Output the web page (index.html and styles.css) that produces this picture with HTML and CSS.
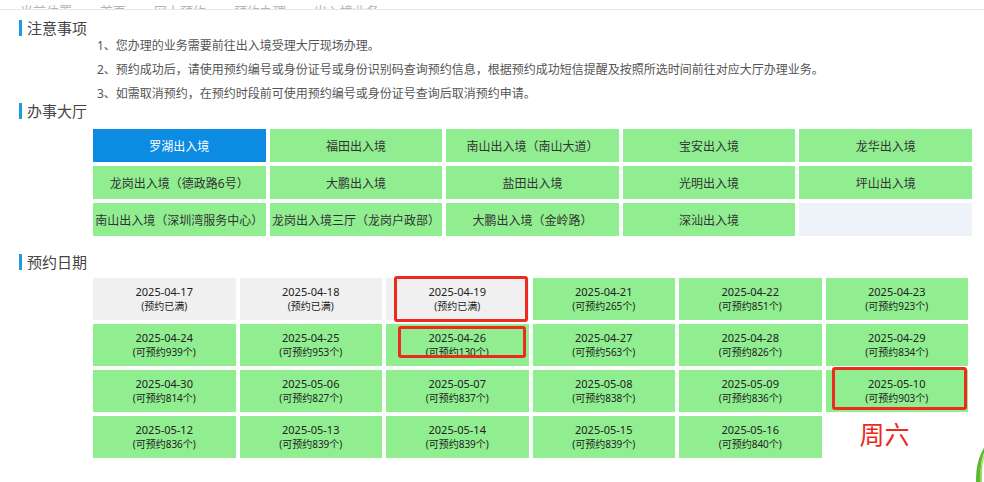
FILE: index.html
```html
<!DOCTYPE html>
<html>
<head>
    <meta charset="UTF-8">
    <title>预约办理</title>
    <link rel="stylesheet" href="styles.css">
</head>
<body>
    <div class="topnav">
        <span>当前位置</span><span>首页</span><span>网上预约</span><span>预约办理</span><span>出入境业务</span>
    </div>

    <h3 class="section-title">注意事项</h3>
    <div class="notes">
        <p>1、您办理的业务需要前往出入境受理大厅现场办理。</p>
        <p>2、预约成功后，请使用预约编号或身份证号或身份识别码查询预约信息，根据预约成功短信提醒及按照所选时间前往对应大厅办理业务。</p>
        <p>3、如需取消预约，在预约时段前可使用预约编号或身份证号查询后取消预约申请。</p>
    </div>

    <h3 class="section-title hall-title">办事大厅</h3>
    <div class="hall-grid">
        <div class="hall active">罗湖出入境</div>
        <div class="hall">福田出入境</div>
        <div class="hall">南山出入境（南山大道）</div>
        <div class="hall">宝安出入境</div>
        <div class="hall">龙华出入境</div>
        <div class="hall">龙岗出入境（德政路6号）</div>
        <div class="hall">大鹏出入境</div>
        <div class="hall">盐田出入境</div>
        <div class="hall">光明出入境</div>
        <div class="hall">坪山出入境</div>
        <div class="hall">南山出入境（深圳湾服务中心）</div>
        <div class="hall">龙岗出入境三厅（龙岗户政部）</div>
        <div class="hall">大鹏出入境（金岭路）</div>
        <div class="hall">深汕出入境</div>
        <div class="hall empty"></div>
    </div>

    <h3 class="section-title date-title">预约日期</h3>
    <div class="date-grid">
        <div class="day full"><b>2025-04-17</b><span>(预约已满)</span></div>
        <div class="day full"><b>2025-04-18</b><span>(预约已满)</span></div>
        <div class="day full"><b>2025-04-19</b><span>(预约已满)</span><i class="mark mark-a"></i></div>
        <div class="day"><b>2025-04-21</b><span>(可预约265个)</span></div>
        <div class="day"><b>2025-04-22</b><span>(可预约851个)</span></div>
        <div class="day"><b>2025-04-23</b><span>(可预约923个)</span></div>
        <div class="day"><b>2025-04-24</b><span>(可预约939个)</span></div>
        <div class="day"><b>2025-04-25</b><span>(可预约953个)</span></div>
        <div class="day"><b>2025-04-26</b><span>(可预约130个)</span><i class="mark mark-b"></i></div>
        <div class="day"><b>2025-04-27</b><span>(可预约563个)</span></div>
        <div class="day"><b>2025-04-28</b><span>(可预约826个)</span></div>
        <div class="day"><b>2025-04-29</b><span>(可预约834个)</span></div>
        <div class="day"><b>2025-04-30</b><span>(可预约814个)</span></div>
        <div class="day"><b>2025-05-06</b><span>(可预约827个)</span></div>
        <div class="day"><b>2025-05-07</b><span>(可预约837个)</span></div>
        <div class="day"><b>2025-05-08</b><span>(可预约838个)</span></div>
        <div class="day"><b>2025-05-09</b><span>(可预约836个)</span></div>
        <div class="day"><b>2025-05-10</b><span>(可预约903个)</span><i class="mark mark-c"></i></div>
        <div class="day"><b>2025-05-12</b><span>(可预约836个)</span></div>
        <div class="day"><b>2025-05-13</b><span>(可预约839个)</span></div>
        <div class="day"><b>2025-05-14</b><span>(可预约839个)</span></div>
        <div class="day"><b>2025-05-15</b><span>(可预约839个)</span></div>
        <div class="day"><b>2025-05-16</b><span>(可预约840个)</span></div>
        <div class="note-cell">周六</div>
    </div>

    <svg class="leaf" width="10" height="34" viewBox="0 0 10 34">
        <path d="M10 0 C5 8 2 18 2 34 L7 34 C6 22 7 12 10 5 Z" fill="#5cb82e"/>
        <path d="M10 6 C7 14 6 24 6 34 L8 34 C8 24 8 16 10 10 Z" fill="#9bdc66"/>
    </svg>
</body>
</html>
```

FILE: styles.css
```css
html, body {
    margin: 0;
    padding: 0;
    background: #ffffff;
}
body {
    font-family: "Noto Sans", "Noto Sans CJK SC", sans-serif;
    color: #333333;
    width: 984px;
    height: 482px;
    overflow: hidden;
    position: relative;
}
.topnav {
    height: 9px;
    overflow: hidden;
    border-bottom: 1px solid #e6e6e6;
    padding-left: 20px;
    font-size: 13px;
    line-height: 13px;
    color: #b5b5b5;
    display: flex;
    align-items: flex-end;
    gap: 28px;
}
.topnav span {
    margin-bottom: -9px;
}
.section-title {
    margin: 10px 0 0 19px;
    padding-left: 5px;
    border-left: 3px solid #1b9ce3;
    font-size: 15px;
    font-weight: normal;
    line-height: 16px;
    height: 16px;
    color: #444444;
}
.notes {
    margin: -2px 0 0 97px;
    font-size: 12px;
    line-height: 24px;
    color: #555555;
}
.notes p {
    margin: 0;
}
.hall-title {
    margin-top: -3px;
}
.hall-grid {
    margin: 10px 0 0 93px;
    width: 879px;
    display: grid;
    grid-template-columns: repeat(5, 1fr);
    grid-auto-rows: 33px;
    gap: 4px;
}
.hall {
    background: #90ee90;
    font-size: 12px;
    color: #333333;
    display: flex;
    align-items: center;
    justify-content: center;
    white-space: nowrap;
}
.hall.active {
    background: #0b8ce2;
    color: #ffffff;
}
.hall.empty {
    background: #edf3f9;
}
.date-title {
    margin-top: 18px;
}
.date-grid {
    margin: 8px 0 0 93px;
    width: 875px;
    display: grid;
    grid-template-columns: repeat(6, 1fr);
    grid-auto-rows: 42px;
    gap: 4px 4px;
}
.day {
    position: relative;
    background: #90ee90;
    display: flex;
    flex-direction: column;
    align-items: center;
    justify-content: center;
    color: #222222;
}
.day.full {
    background: #f0f0f0;
}
.day b {
    font-weight: normal;
    font-size: 11px;
    line-height: 14px;
}
.day span {
    font-size: 10px;
    line-height: 14px;
}
.mark {
    position: absolute;
    border: 3px solid #ec2a1e;
    border-radius: 3px;
}
.mark-a {
    left: 8px;
    right: 1px;
    top: -2px;
    bottom: -2px;
}
.mark-b {
    left: 12px;
    right: 3px;
    top: 2px;
    bottom: 8px;
}
.mark-c {
    left: 6px;
    right: 1px;
    top: -3px;
    bottom: 2px;
}
.note-cell {
    color: #ec2a1e;
    font-family: "Noto Sans CJK SC", sans-serif;
    font-size: 25px;
    line-height: 34px;
    padding-left: 34px;
}
.leaf {
    position: absolute;
    right: 0;
    bottom: 0;
}
```
